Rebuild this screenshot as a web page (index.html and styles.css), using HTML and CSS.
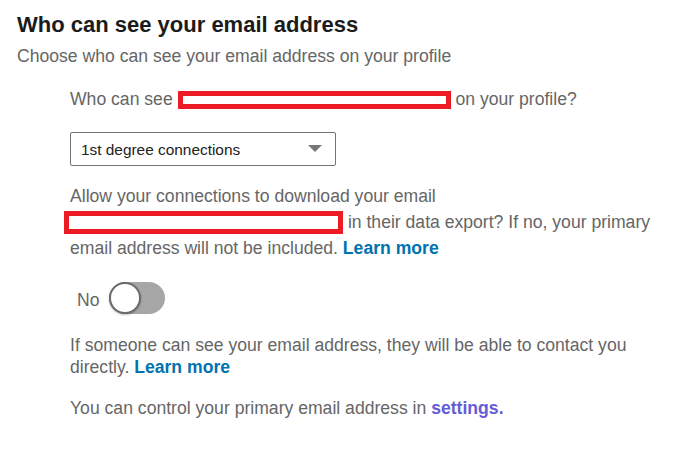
FILE: index.html
```html
<!DOCTYPE html>
<html lang="en">
<head>
    <meta charset="UTF-8">
    <meta name="viewport" content="width=device-width, initial-scale=1.0">
    <title>Who can see your email address</title>
    <link rel="stylesheet" href="styles.css">
</head>
<body>
    <div class="panel">
        <h1>Who can see your email address</h1>
        <p class="subtitle">Choose who can see your email address on your profile</p>

        <div class="content">
            <p class="question">Who can see <span class="redact redact-sm"></span> on your profile?</p>

            <div class="select">
                <span>1st degree connections</span>
                <svg class="caret" width="14" height="7" viewBox="0 0 14 7">
                    <polygon points="0,0 14,0 7,7" fill="#777"></polygon>
                </svg>
            </div>

            <p class="export">Allow your connections to download your email <span class="redact redact-lg"></span> in their data export? If no, your primary email address will not be included. <a href="#" class="link">Learn more</a></p>

            <div class="toggle-row">
                <span class="toggle-label">No</span>
                <div class="toggle"><div class="knob"></div></div>
            </div>

            <p class="note">If someone can see your email address, they will be able to contact you directly. <a href="#" class="link">Learn more</a></p>

            <p class="note last">You can control your primary email address in <a href="#" class="link visited">settings.</a></p>
        </div>
    </div>
</body>
</html>
```

FILE: styles.css
```css
body {
    margin: 0;
    background-color: #fff;
    font-family: 'Liberation Sans', Arial, sans-serif;
    color: #666;
}
.panel {
    padding: 11px 20px 0 17px;
}
h1 {
    margin: 0;
    font-size: 22px;
    line-height: 28px;
    font-weight: bold;
    color: #1b1b1b;
}
p {
    margin: 0;
    font-size: 17.6px;
    line-height: 22.4px;
}
.subtitle {
    margin-top: 6px;
}
.content {
    padding-left: 53px;
}
.question {
    margin-top: 21px;
}
.redact {
    display: inline-block;
    box-sizing: border-box;
    border: 5px solid #ed1c24;
    background-color: #fff;
}
.redact-sm {
    width: 273px;
    height: 18px;
    vertical-align: -4px;
}
.redact-lg {
    width: 279px;
    height: 23px;
    margin-left: -6px;
    vertical-align: -6px;
}
.select {
    box-sizing: border-box;
    width: 266px;
    height: 34px;
    margin-top: 21px;
    padding: 2px 13px 0 10px;
    border: 1px solid #737373;
    border-radius: 2px;
    display: flex;
    align-items: center;
    justify-content: space-between;
    font-size: 15.4px;
    color: #222;
}
.caret {
    display: block;
    margin-top: -2px;
}
.export {
    margin-top: 17px;
    line-height: 26px;
}
.link {
    color: #0073b1;
    font-weight: bold;
    text-decoration: none;
}
.link.visited {
    color: #645cd6;
}
.toggle-row {
    margin-top: 21px;
    padding-left: 7px;
    display: flex;
    align-items: center;
    gap: 9px;
}
.toggle-label {
    font-size: 17.6px;
    line-height: 22px;
    margin-top: 5px;
}
.toggle {
    width: 56px;
    height: 32px;
    border-radius: 16px;
    background-color: #a6a6a6;
}
.knob {
    box-sizing: border-box;
    width: 32px;
    height: 32px;
    border-radius: 50%;
    background-color: #fff;
    border: 2px solid #6b6b6b;
    box-shadow: 0 1px 2px rgba(0, 0, 0, 0.25);
}
.note {
    margin-top: 20px;
}
.note.last {
    margin-top: 18px;
}
```
